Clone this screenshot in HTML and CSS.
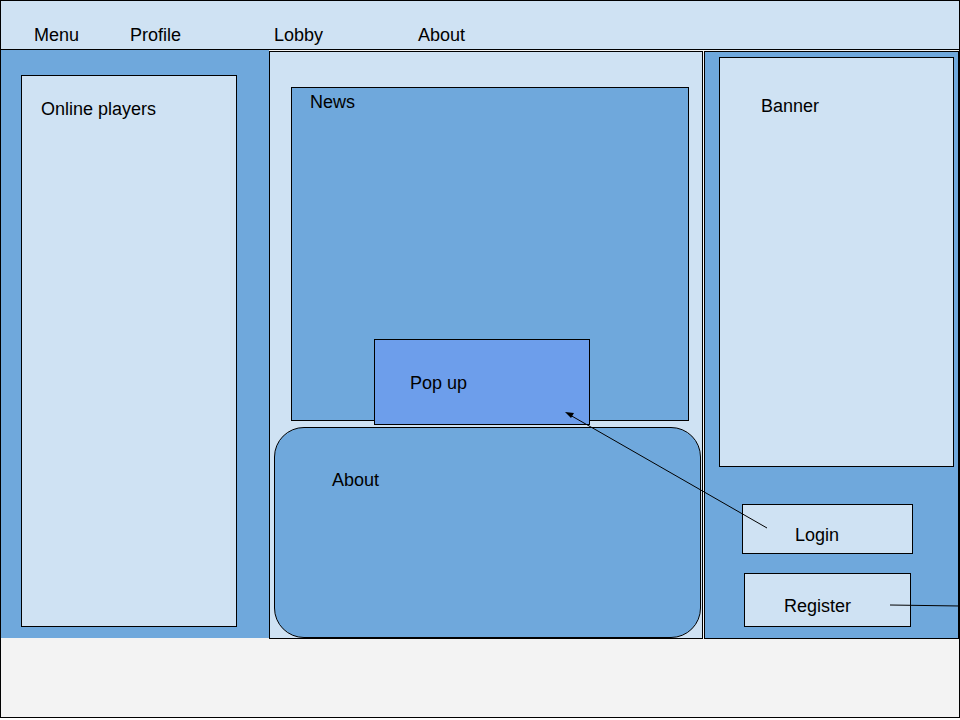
FILE: index.html
```html
<!DOCTYPE html>
<html lang="en">
<head>
  <meta charset="UTF-8" />
  <title>Game site wireframe</title>
  <link rel="stylesheet" href="styles.css">
</head>
<body>

  <div class="page">
    <!-- top navigation -->
    <div class="topbar">
      <span class="nav-item menu">Menu</span>
      <span class="nav-item profile">Profile</span>
      <span class="nav-item lobby">Lobby</span>
      <span class="nav-item">About</span>
    </div>

    <div class="main">
      <!-- left column -->
      <div class="left-col">
        <div class="players box">Online players</div>
      </div>

      <!-- middle column -->
      <div class="mid-col">
        <div class="news box">News</div>
        <div class="about box">About</div>
        <div class="popup box">Pop up</div>
      </div>

      <!-- right column -->
      <div class="right-col">
        <div class="banner box">Banner</div>
        <div class="login box">Login</div>
        <div class="register box">Register</div>
      </div>
    </div>

    <!-- connector arrows -->
    <svg class="arrows" width="960" height="718" viewBox="0 0 960 718">
      <line x1="767" y1="528" x2="570" y2="415" stroke="#000" stroke-width="1" />
      <polygon points="565,412 574,413 571,418" fill="#000" />
      <line x1="890" y1="605" x2="960" y2="606" stroke="#000" stroke-width="1" />
    </svg>
  </div>

</body>
</html>
```

FILE: styles.css
```css
* {
  box-sizing: border-box;
}
body {
  font-family: 'Liberation Sans', Arial, sans-serif;
  margin: 0;
  padding: 0;
  background-color: #ffffff;
  color: #000;
}
.page {
  position: relative;
  width: 960px;
  height: 718px;
  border: 1px solid #000;
  background-color: #f3f3f3;
  overflow: hidden;
  font-size: 18px;
  line-height: 23px;
}
.topbar {
  display: flex;
  height: 49px;
  padding: 23px 0 0 33px;
  background-color: #cfe2f3;
  border-bottom: 1px solid #000;
}
.nav-item.menu {
  width: 96px;
}
.nav-item.profile,
.nav-item.lobby {
  width: 144px;
}
.main {
  display: flex;
  align-items: flex-start;
  height: 589px;
}
.box {
  border: 1px solid #000;
}
.left-col {
  width: 268px;
  height: 588px;
  padding: 25px 0 0 20px;
  background-color: #6fa8dc;
}
.players {
  width: 216px;
  height: 552px;
  padding: 22px 0 0 19px;
  background-color: #cfe2f3;
}
.mid-col {
  position: relative;
  display: flex;
  flex-direction: column;
  width: 434px;
  height: 588px;
  margin-top: 1px;
  padding-top: 35px;
  border: 1px solid #000;
  background-color: #cfe2f3;
}
.news {
  width: 398px;
  height: 334px;
  margin-left: 21px;
  padding: 3px 0 0 18px;
  background-color: #6fa8dc;
}
.about {
  width: 427px;
  height: 211px;
  margin: 6px 0 0 4px;
  padding: 41px 0 0 57px;
  border-radius: 30px;
  background-color: #6fa8dc;
}
.popup {
  position: absolute;
  left: 104px;
  top: 287px;
  width: 216px;
  height: 86px;
  padding: 32px 0 0 35px;
  background-color: #6d9eeb;
}
.right-col {
  display: flex;
  flex-direction: column;
  align-items: flex-start;
  width: 255px;
  height: 588px;
  margin: 1px 0 0 1px;
  padding: 5px 0 0 14px;
  border: 1px solid #000;
  background-color: #6fa8dc;
}
.banner {
  width: 235px;
  height: 410px;
  padding: 37px 0 0 41px;
  background-color: #cfe2f3;
}
.login {
  width: 171px;
  height: 50px;
  margin: 37px 0 0 23px;
  padding: 19px 0 0 52px;
  background-color: #cfe2f3;
}
.register {
  width: 167px;
  height: 54px;
  margin: 19px 0 0 25px;
  padding: 21px 0 0 39px;
  background-color: #cfe2f3;
}
.arrows {
  position: absolute;
  left: -1px;
  top: -1px;
  pointer-events: none;
}
```
